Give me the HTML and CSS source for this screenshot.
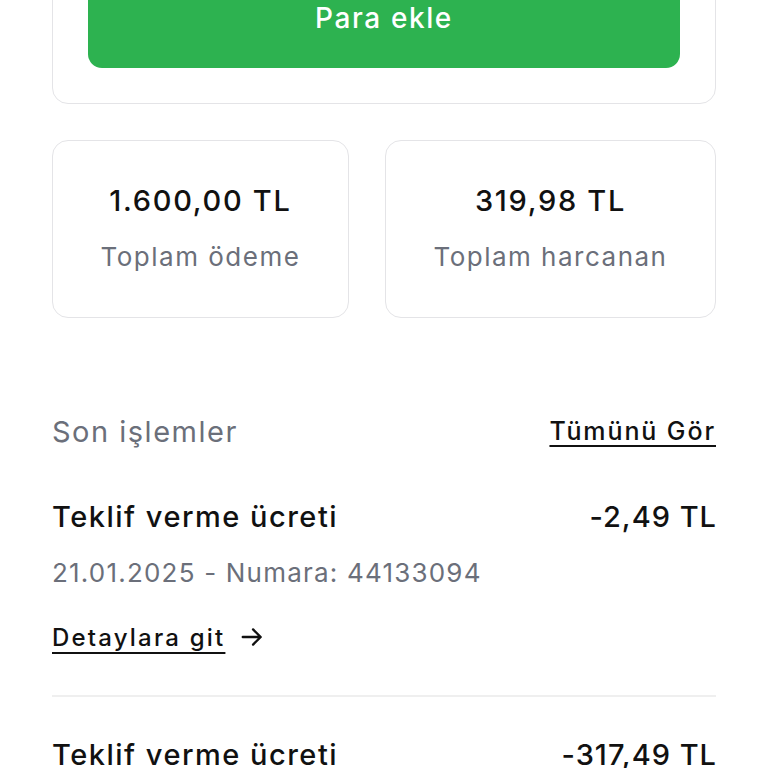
FILE: index.html
```html
<!DOCTYPE html>
<html>
	<head>
		<meta charset="utf-8">
		<title>Cüzdan</title>
		<meta name="viewport" content="width=device-width">
		<link rel="stylesheet" href="styles.css">
	</head>
	<body>
		<div class="pagina">

			<section class="tarjeta_saldo">
				<button class="boton_para">Para ekle</button>
			</section>

			<section class="resumen">
				<div class="resumen_item">
					<p class="resumen_valor">1.600,00 TL</p>
					<p class="resumen_texto">Toplam ödeme</p>
				</div>
				<div class="resumen_item">
					<p class="resumen_valor">319,98 TL</p>
					<p class="resumen_texto">Toplam harcanan</p>
				</div>
			</section>

			<div class="cabecera">
				<h2>Son işlemler</h2>
				<a href="#">Tümünü Gör</a>
			</div>

			<!-- lista de movimientos -->
			<div class="lista">
				<div class="movimiento">
					<div class="movimiento_fila">
						<h3>Teklif verme ücreti</h3>
						<span class="monto">-2,49 TL</span>
					</div>
					<p class="movimiento_fecha">21.01.2025 - Numara: 44133094</p>
					<a href="#" class="detalle"><span>Detaylara git</span>
						<svg width="26" height="26" viewBox="0 0 24 24" fill="none" stroke="#111" stroke-width="2.2" stroke-linecap="round" stroke-linejoin="round"><path d="M3.5 12h16M13 5l7 7-7 7"/></svg>
					</a>
				</div>

				<div class="movimiento">
					<div class="movimiento_fila">
						<h3>Teklif verme ücreti</h3>
						<span class="monto">-317,49 TL</span>
					</div>
				</div>
			</div>

		</div>
	</body>
</html>
```

FILE: styles.css
```css
* {
    margin: 0;
    padding: 0;
    box-sizing: border-box;
    font-family: Inter, Roboto, "Noto Sans", Arial, sans-serif;
}

body {
    background-color: #ffffff;
    overflow: hidden;
    height: 768px;
    letter-spacing: 1.5px;
}

.pagina {
    padding: 0 52px;
    margin-top: -68px;
}

/* tarjeta de saldo */
.tarjeta_saldo {
    border: 1px solid #e4e4e7;
    border-radius: 16px;
    padding: 35px;
}

.boton_para {
    display: block;
    width: 100%;
    height: 100px;
    border: none;
    border-radius: 14px;
    background-color: #2db250;
    color: white;
    font-size: 28px;
    font-weight: 500;
    letter-spacing: 1.6px;
}

/* resumen */
.resumen {
    display: flex;
    gap: 36px;
    margin-top: 36px;
}

.resumen_item {
    flex: 1 1 auto;
    height: 178px;
    border: 1px solid #e4e4e7;
    border-radius: 16px;
    display: flex;
    flex-direction: column;
    align-items: center;
    justify-content: center;
    gap: 20px;
}

.resumen_valor {
    font-size: 29px;
    font-weight: 500;
    color: #111111;
    line-height: 36px;
    letter-spacing: 1.7px;
}

.resumen_texto {
    font-size: 26px;
    color: #6b6f7a;
    line-height: 36px;
}

/* cabecera de movimientos */
.cabecera {
    display: flex;
    justify-content: space-between;
    align-items: center;
    margin-top: 93px;
    height: 40px;
}

.cabecera h2 {
    font-size: 29px;
    font-weight: 400;
    color: #6b6f7a;
}

.cabecera a {
    font-size: 25px;
    font-weight: 500;
    color: #111111;
    letter-spacing: 1.9px;
    text-decoration: underline;
    text-underline-offset: 5px;
    text-decoration-thickness: 2px;
}

.lista {
    margin-top: 8px;
}

.movimiento {
    border-bottom: 2px solid #efefef;
    padding: 37px 0 38px;
}

.movimiento_fila {
    display: flex;
    justify-content: space-between;
    align-items: center;
    height: 40px;
}

.movimiento_fila h3,
.monto {
    font-size: 29px;
    font-weight: 500;
    color: #111111;
}

.monto {
    letter-spacing: 1px;
    margin-right: -1px;
}

.movimiento_fecha {
    font-size: 26px;
    color: #6b6f7a;
    margin-top: 17px;
    line-height: 40px;
    letter-spacing: 1.2px;
}

.detalle {
    display: flex;
    align-items: center;
    gap: 14px;
    margin-top: 24px;
    color: #111111;
    text-decoration: none;
    font-size: 24px;
    font-weight: 500;
    height: 40px;
    letter-spacing: 2.2px;
}

.detalle span {
    text-decoration: underline;
    text-underline-offset: 6px;
    text-decoration-thickness: 2px;
}
```
